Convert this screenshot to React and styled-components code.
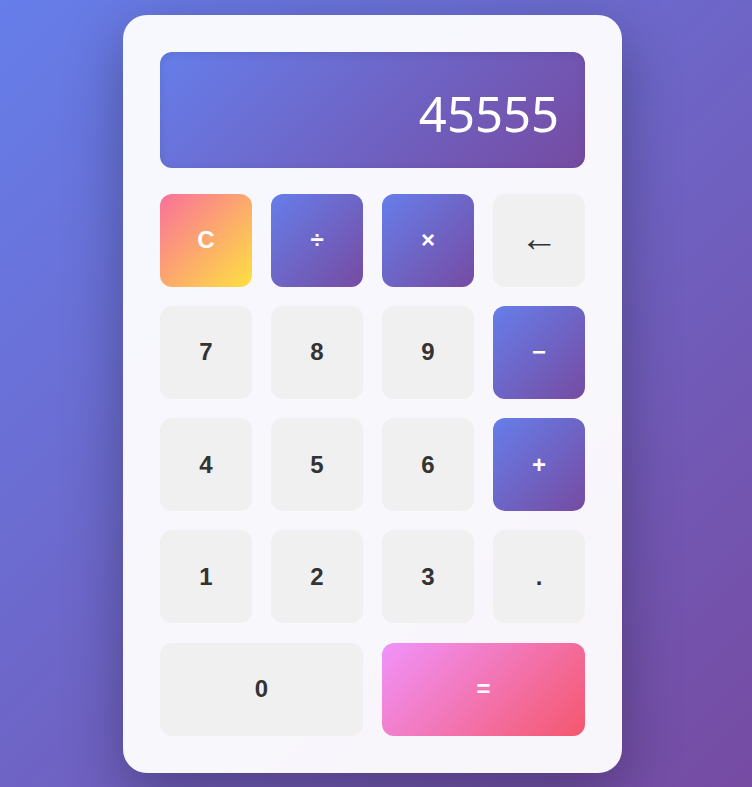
import React from "react";
import styled, { createGlobalStyle, css } from "styled-components";

const Global = createGlobalStyle`
  * { box-sizing: border-box; }
  html, body { margin: 0; padding: 0; }
  body {
    font-family: "Liberation Sans", Arial, sans-serif;
    background: linear-gradient(135deg, #667eea 0%, #764ba2 100%);
    min-height: 100vh;
  }
`;

const Page = styled.div`
  min-height: 100vh;
  display: flex;
  align-items: center;
  justify-content: center;
  padding-right: 7px;
`;

const Card = styled.div`
  width: 499px;
  padding: 37px;
  background: rgba(255, 255, 255, 0.95);
  border-radius: 24px;
  box-shadow: 0 20px 60px rgba(0, 0, 0, 0.3);
`;

const Display = styled.div`
  height: 116px;
  margin-bottom: 26px;
  border-radius: 12px;
  background: linear-gradient(135deg, #667eea 0%, #764ba2 100%);
  box-shadow: inset 0 2px 10px rgba(0, 0, 0, 0.1);
  display: flex;
  align-items: center;
  justify-content: flex-end;
  padding: 6px 26px 0;
  color: #fff;
  font-family: "Noto Sans", "Open Sans", sans-serif;
  font-size: 49px;
  font-weight: 400;
`;

const Keys = styled.div`
  display: grid;
  grid-template-columns: repeat(4, 92px);
  grid-auto-rows: 93px;
  column-gap: 19px;
  row-gap: 19.25px;
`;

const variants = {
  number: css`
    background: #f0f0f0;
    color: #333;
  `,
  operator: css`
    background: linear-gradient(135deg, #667eea 0%, #764ba2 100%);
    color: #fff;
  `,
  clear: css`
    background: linear-gradient(135deg, #fa709a 0%, #fee140 100%);
    color: #fff;
  `,
  equals: css`
    background: linear-gradient(135deg, #f093fb 0%, #f5576c 100%);
    color: #fff;
  `,
};

const Key = styled.button`
  border: none;
  border-radius: 12px;
  font-family: "Liberation Sans", Arial, sans-serif;
  font-size: ${(p) => (p.$light ? "38px" : "24px")};
  font-weight: ${(p) => (p.$light ? 400 : 700)};
  display: flex;
  align-items: center;
  justify-content: center;
  padding: ${(p) => (p.$light ? "0 0 4px" : "0")};
  cursor: pointer;
  grid-column: span ${(p) => p.$span || 1};
  ${(p) => variants[p.$kind || "number"]}
`;

const keys = [
  { label: "C", kind: "clear" },
  { label: "÷", kind: "operator" },
  { label: "×", kind: "operator" },
  { label: "←", kind: "number", light: true },
  { label: "7" },
  { label: "8" },
  { label: "9" },
  { label: "−", kind: "operator" },
  { label: "4" },
  { label: "5" },
  { label: "6" },
  { label: "+", kind: "operator" },
  { label: "1" },
  { label: "2" },
  { label: "3" },
  { label: "." },
  { label: "0", span: 2 },
  { label: "=", kind: "equals", span: 2 },
];

export default function App() {
  return (
    <>
      <Global />
      <Page>
        <Card>
          <Display>45555</Display>
          <Keys>
            {keys.map((k, i) => (
              <Key key={i} $kind={k.kind} $span={k.span} $light={k.light}>
                {k.label}
              </Key>
            ))}
          </Keys>
        </Card>
      </Page>
    </>
  );
}
